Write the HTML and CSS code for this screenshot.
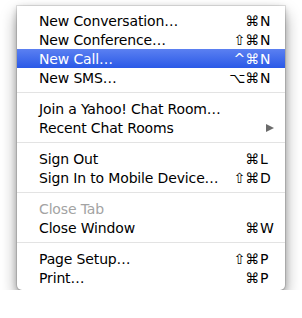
FILE: index.html
```html
<!DOCTYPE html>
<html lang="en">
<head>
	<meta charset="UTF-8">
	<title>Menu</title>
	<link rel="stylesheet" href="styles.css">
</head>
<body>
	<ul class="menu">
		<li class="item"><span class="label">New Conversation…</span><span class="mods">⌘</span><span class="key">N</span></li>
		<li class="item"><span class="label">New Conference…</span><span class="mods">⇧⌘</span><span class="key">N</span></li>
		<li class="item active"><span class="label">New Call…</span><span class="mods">^⌘</span><span class="key">N</span></li>
		<li class="item"><span class="label">New SMS…</span><span class="mods">⌥⌘</span><span class="key">N</span></li>
		<li class="sep"></li>
		<li class="item"><span class="label">Join a Yahoo! Chat Room…</span></li>
		<li class="item"><span class="label">Recent Chat Rooms</span><span class="arrow"></span></li>
		<li class="sep"></li>
		<li class="item"><span class="label">Sign Out</span><span class="mods">⌘</span><span class="key">L</span></li>
		<li class="item"><span class="label">Sign In to Mobile Device…</span><span class="mods">⇧⌘</span><span class="key">D</span></li>
		<li class="sep"></li>
		<li class="item disabled"><span class="label">Close Tab</span></li>
		<li class="item"><span class="label">Close Window</span><span class="mods">⌘</span><span class="key">W</span></li>
		<li class="sep"></li>
		<li class="item"><span class="label">Page Setup…</span><span class="mods">⇧⌘</span><span class="key">P</span></li>
		<li class="item"><span class="label">Print…</span><span class="mods">⌘</span><span class="key">P</span></li>
	</ul>
</body>
</html>
```

FILE: styles.css
```css
*{
	margin: 0;
	padding: 0;
}
body{
	background: #fff;
	font-family: "DejaVu Sans", sans-serif;
	font-size: 14px;
	color: #000;
}
.menu{
	list-style: none;
	width: 268px;
	margin: 6px 0 0 17px;
	padding: 5px 0 3px;
	background: #fff;
	border-radius: 0 0 5px 5px;
	box-shadow: 0 0 0 1px rgba(0,0,0,0.1), 0 2px 6px rgba(0,0,0,0.2), 0 8px 16px rgba(0,0,0,0.4);
}
.item{
	display: flex;
	align-items: center;
	height: 19px;
	padding: 0 11px 0 22px;
	letter-spacing: -0.15px;
}
.item .label{
	flex: 1;
	white-space: nowrap;
}
.item .mods{
	padding-right: 1px;
}
.item .key{
	width: 14px;
}
.item.active{
	background: linear-gradient(#5b80f1, #2a59e7);
	color: #fff;
}
.item.disabled{
	color: #a3a3a3;
}
.arrow{
	width: 0;
	height: 0;
	border-top: 4.5px solid transparent;
	border-bottom: 4.5px solid transparent;
	border-left: 8px solid #6b6b6b;
}
.sep{
	height: 1px;
	margin: 5px 0 6px;
	background: #e3e3e3;
}
```
